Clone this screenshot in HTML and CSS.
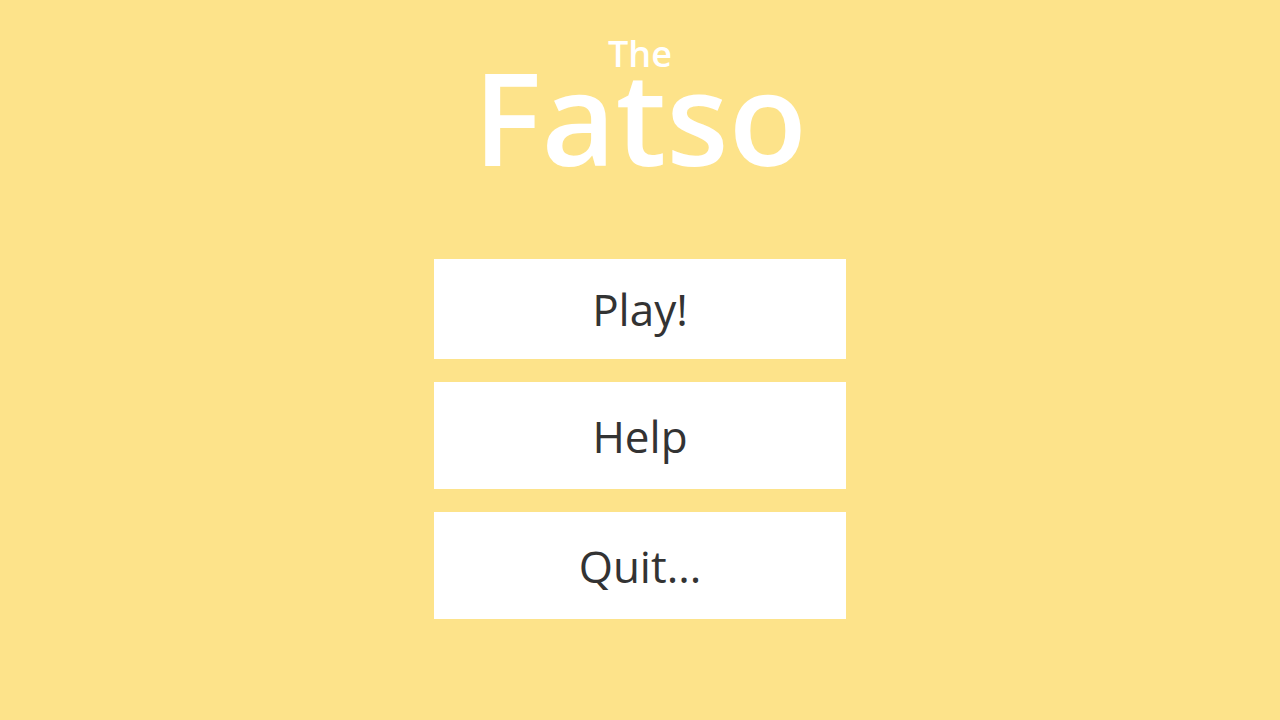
FILE: index.html
```html
<!DOCTYPE html>
<html>
<head>
    <title>The Fatso</title>
    <link rel="stylesheet" href="styles.css">
</head>
<body>
    <div class="menu-screen">
        <h1 class="game-title">
            <span class="title-small">The</span>
            <span class="title-big">Fatso</span>
        </h1>
        <div class="menu-buttons">
            <button class="menu-button play-button">Play!</button>
            <button class="menu-button">Help</button>
            <button class="menu-button">Quit...</button>
        </div>
    </div>
</body>
</html>
```

FILE: styles.css
```css
body {
    font-family: 'Open Sans', 'Noto Sans', sans-serif;
    background-color: #fde38a;
    margin: 0;
    padding: 0;
    height: 100vh;
}

.menu-screen {
    display: flex;
    flex-direction: column;
    align-items: center;
}

.game-title {
    margin: 0;
    padding-top: 32px;
    display: flex;
    flex-direction: column;
    align-items: center;
    color: #fff;
    font-weight: 600;
}

.title-small {
    font-size: 36px;
    line-height: 44px;
}

.title-big {
    font-size: 128px;
    line-height: 104px;
    margin-top: -11px;
}

.menu-buttons {
    margin-top: 90px;
    display: flex;
    flex-direction: column;
    gap: 23px;
}

.menu-button {
    width: 412px;
    height: 107px;
    background-color: #fff;
    border: none;
    padding: 0;
    font-family: inherit;
    font-size: 44px;
    color: #333;
    cursor: pointer;
}

.play-button {
    height: 100px;
}
```
